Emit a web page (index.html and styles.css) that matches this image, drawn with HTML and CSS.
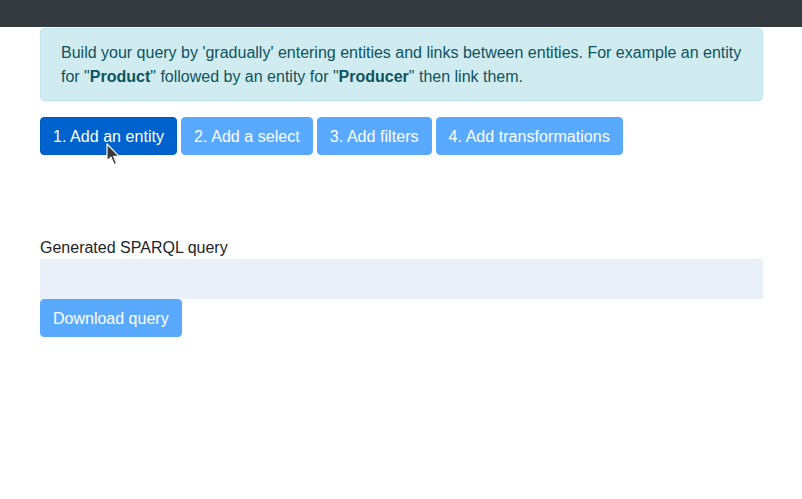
FILE: index.html
```html
<!DOCTYPE html>
<html lang="en">
<head>
<meta charset="utf-8">
<title>SPARQL query builder</title>
<link rel="stylesheet" href="styles.css">
</head>
<body>
<nav class="navbar"></nav>
<main class="container">
  <div class="alert">Build your query by 'gradually' entering entities and links between entities. For example an entity for "<b>Product</b>" followed by an entity for "<b>Producer</b>" then link them.</div>
  <div class="steps">
    <button class="btn active">1. Add an entity</button>
    <button class="btn disabled">2. Add a select</button>
    <button class="btn disabled">3. Add filters</button>
    <button class="btn disabled">4. Add transformations</button>
    <svg class="cursor" width="15" height="24" viewBox="0 0 15 24"><path d="M1 1 L1 18 L5 14.2 L8 21.5 L10.6 20.4 L7.7 13.4 L13.2 13.4 Z" fill="#3a3a3a" stroke="#fff" stroke-width="1.2" stroke-linejoin="round"/></svg>
  </div>
  <div class="query">
    <label class="label">Generated SPARQL query</label>
    <div class="code"></div>
    <button class="btn disabled download">Download query</button>
  </div>
</main>
</body>
</html>
```
FILE: styles.css
```css
* { box-sizing: border-box; }
body {
  margin: 0;
  font-family: "Liberation Sans", Arial, sans-serif;
  font-size: 16px;
  line-height: 24px;
  color: #212529;
  background: #fff;
}
.navbar {
  height: 27px;
  background: #343a40;
}
.container {
  width: 723px;
  margin: 1px 0 0 40px;
}
.alert {
  background: #d1ecf1;
  border: 1px solid #bee5eb;
  color: #0c5460;
  border-radius: 4px;
  padding: 12px 20px 11px;
  margin-bottom: 16px;
}
.alert b { font-weight: 700; }
.steps {
  position: relative;
  display: flex;
  gap: 4px;
}
.btn {
  font-family: inherit;
  font-size: 16px;
  line-height: 24px;
  letter-spacing: 0.05px;
  height: 38px;
  padding: 7px 12px 5px;
  border: 1px solid #007bff;
  border-radius: 4px;
  background: #007bff;
  color: #fff;
}
.btn.active {
  background: #0062cc;
  border-color: #005cbf;
}
.btn.disabled {
  background: #59a9ff;
  border-color: #59a9ff;
}
.btn.download { letter-spacing: 0; }
.cursor {
  position: absolute;
  left: 66px;
  top: 26px;
}
.query {
  margin-top: 80px;
  display: flex;
  flex-direction: column;
  align-items: flex-start;
}
.label {
  display: block;
  padding-top: 2px;
  line-height: 22px;
}
.code {
  align-self: stretch;
  height: 40px;
  background: #e9f0f8;
}
```
